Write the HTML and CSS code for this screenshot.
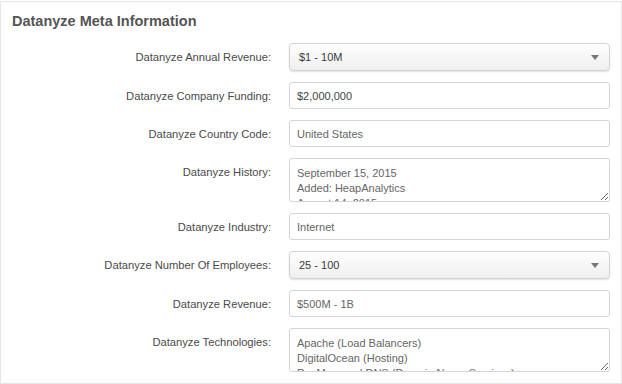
FILE: index.html
```html
<!DOCTYPE html>
<html>
<head>
<meta charset="utf-8">
<link rel="stylesheet" href="styles.css">
</head>
<body>
<section class="panel">
  <h2 class="title">Datanyze Meta Information</h2>
  <div class="form">
    <label class="label">Datanyze Annual Revenue:</label>
    <div class="select"><span>$1 - 10M</span><span class="caret"></span></div>

    <label class="label">Datanyze Company Funding:</label>
    <input class="input dark" type="text" value="$2,000,000">

    <label class="label">Datanyze Country Code:</label>
    <input class="input" type="text" value="United States">

    <label class="label top">Datanyze History:</label>
    <textarea class="area">September 15, 2015
Added: HeapAnalytics
August 14, 2015
Added: Optimizely</textarea>

    <label class="label">Datanyze Industry:</label>
    <input class="input" type="text" value="Internet">

    <label class="label">Datanyze Number Of Employees:</label>
    <div class="select"><span>25 - 100</span><span class="caret"></span></div>

    <label class="label">Datanyze Revenue:</label>
    <input class="input" type="text" value="$500M - 1B">

    <label class="label top">Datanyze Technologies:</label>
    <textarea class="area">Apache (Load Balancers)
DigitalOcean (Hosting)
DynManaged DNS (Domain Name Services)
Google Analytics (Analytics)</textarea>
  </div>
</section>
</body>
</html>
```

FILE: styles.css
```css
html, body {
  margin: 0;
  padding: 0;
  background: #ffffff;
}
body {
  font-family: "Liberation Sans", Arial, sans-serif;
}
.panel {
  box-sizing: border-box;
  margin-top: 1px;
  width: 622px;
  height: 383px;
  border: 1px solid #e6e6e6;
  padding: 0 0 11px 0;
}
.title {
  margin: 0;
  box-sizing: border-box;
  height: 41px;
  padding: 10px 0 0 11px;
  font-size: 14.5px;
  line-height: 18px;
  font-weight: bold;
  color: #555555;
}
.form {
  display: grid;
  grid-template-columns: 270px 321px;
  column-gap: 18px;
  row-gap: 11px;
  align-items: center;
}
.label {
  text-align: right;
  font-size: 11.2px;
  color: #4a4a4a;
}
.label.top {
  align-self: start;
  padding-top: 8px;
}
.select {
  box-sizing: border-box;
  height: 28px;
  border: 1px solid #d2d2d2;
  border-radius: 4px;
  background: linear-gradient(#ffffff, #efefef);
  box-shadow: 0 1px 2px rgba(0, 0, 0, 0.12);
  display: flex;
  align-items: center;
  justify-content: space-between;
  padding: 0 10px 0 9px;
  font-size: 11px;
  color: #3a3a3a;
}
.caret {
  width: 0;
  height: 0;
  border-left: 4px solid transparent;
  border-right: 4px solid transparent;
  border-top: 5px solid #777777;
}
.input {
  box-sizing: border-box;
  width: 321px;
  height: 27px;
  margin: 0;
  border: 1px solid #d5d5d5;
  border-radius: 3px;
  padding: 0 7px;
  font-family: "Liberation Sans", Arial, sans-serif;
  font-size: 11px;
  color: #666666;
  background: #ffffff;
  outline: none;
}
.input.dark {
  color: #444444;
}
.area {
  box-sizing: border-box;
  display: block;
  width: 321px;
  height: 44px;
  margin: 0;
  border: 1px solid #d5d5d5;
  border-radius: 3px;
  padding: 7px 7px 0 7px;
  font-family: "Liberation Sans", Arial, sans-serif;
  font-size: 11px;
  line-height: 15px;
  color: #666666;
  background: #ffffff;
  overflow: hidden;
  resize: vertical;
  outline: none;
}
```
